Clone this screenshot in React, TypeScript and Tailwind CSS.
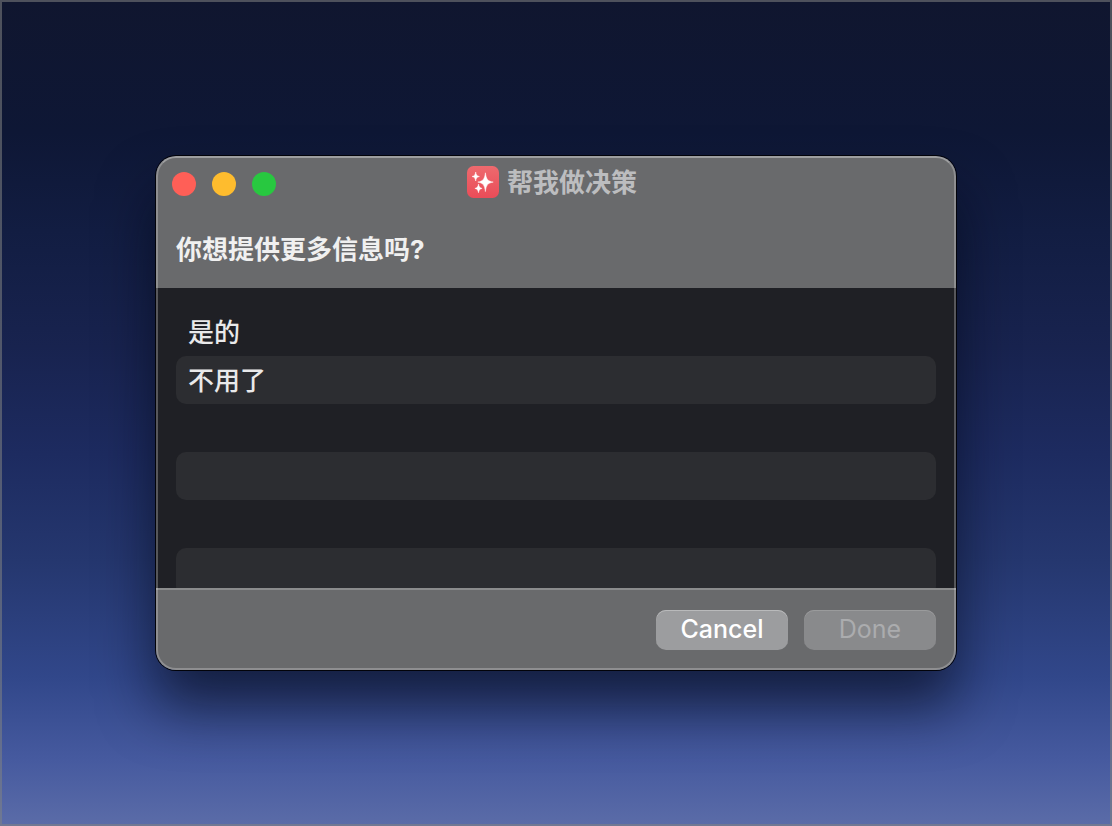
import React from "react";

const options: string[] = ["是的", "不用了", "", "", "", ""];

function SparklesIcon() {
  return (
    <svg viewBox="0 0 32 32" className="size-8 shrink-0" aria-hidden="true">
      <defs>
        <linearGradient id="tile" x1="0" y1="0" x2="0" y2="1">
          <stop offset="0" stopColor="#ee6a6e" />
          <stop offset="1" stopColor="#ea4c58" />
        </linearGradient>
      </defs>
      <rect width="32" height="32" rx="6.5" fill="url(#tile)" />
      <g fill="#ffffff" stroke="#ffffff" strokeWidth="0.5" strokeLinejoin="round">
        <path d="M18.4 6.8C19.2 13.2 20.8 15.2 26.2 16.1C20.8 17 19.2 19 18.4 25.6C17.6 19 16 17 10.8 16.1C16 15.2 17.6 13.2 18.4 6.8Z" />
        <path d="M8.7 6C9.2 9 9.9 10 12.4 10.5C9.9 11 9.2 12 8.7 15C8.2 12 7.5 11 5 10.5C7.5 10 8.2 9 8.7 6Z" />
        <path d="M11.5 18.1C12 21 12.7 21.9 15.1 22.4C12.7 22.9 12 23.8 11.5 26.7C11 23.8 10.3 22.9 7.9 22.4C10.3 21.9 11 21 11.5 18.1Z" />
      </g>
    </svg>
  );
}

function WindowControls() {
  return (
    <div className="flex gap-4">
      <button type="button" aria-label="Close" className="size-6 rounded-full bg-[#ff5f57]" />
      <button type="button" aria-label="Minimize" className="size-6 rounded-full bg-[#febc2e]" />
      <button type="button" aria-label="Zoom" className="size-6 rounded-full bg-[#28c840]" />
    </div>
  );
}

function OptionList() {
  return (
    <ul className="h-[300px] overflow-hidden bg-[#1f2025] px-5 pt-5">
      {options.map((label, index) => (
        <li key={index} className="h-12 rounded-[10px] even:bg-[#2c2d31]">
          {label && (
            <button
              type="button"
              className="flex h-12 w-full items-center px-3 pt-0.5 text-left text-[26px] leading-8 font-medium text-[#e9e9ea]"
            >
              {label}
            </button>
          )}
        </li>
      ))}
    </ul>
  );
}

export default function App() {
  return (
    <main className="relative flex min-h-screen items-center justify-center bg-[linear-gradient(to_bottom,#10162f_0%,#0e1735_16%,#121d42_28%,#18234f_42%,#1d2b60_55%,#25376f_68%,#31478a_82%,#465a9f_92%,#5b6ca8_100%)] p-8 font-[Inter,'Noto_Sans_CJK_SC',sans-serif]">
      <section
        role="dialog"
        aria-labelledby="prompt"
        className="relative w-full max-w-[800px] overflow-hidden rounded-[20px] shadow-[0_0_0_1px_#02030a,0_36px_56px_rgba(3,6,20,0.62)]"
      >
        <header className="h-[132px] bg-[#696a6c]">
          <div className="grid h-14 grid-cols-[1fr_auto_1fr] items-center px-4">
            <WindowControls />
            <div className="flex items-center gap-2 pr-2 pb-1">
              <SparklesIcon />
              <h1 className="pt-0.5 text-[26px] leading-8 font-bold text-[#bcbdbf]">帮我做决策</h1>
            </div>
          </div>
          <h2 id="prompt" className="px-5 pt-[22px] text-[26px] leading-8 font-bold text-[#f0f0f0]">
            你想提供更多信息吗?
          </h2>
        </header>
        <OptionList />
        <footer className="flex h-[82px] justify-end gap-4 border-t-2 border-[#8b8c8d] bg-[#696a6c] px-5 pt-5">
          <button
            type="button"
            className="flex h-10 w-[132px] items-center justify-center rounded-[10px] bg-[#9c9d9f] pb-0.5 text-[25px] leading-8 font-medium text-white shadow-[inset_0_1px_0_#b9babb]"
          >
            Cancel
          </button>
          <button
            type="button"
            disabled
            className="flex h-10 w-[132px] items-center justify-center rounded-[10px] bg-[#898a8c] pb-0.5 text-[25px] leading-8 text-[#abacae] shadow-[inset_0_1px_0_#9a9b9c]"
          >
            Done
          </button>
        </footer>
        <div className="pointer-events-none absolute inset-0 rounded-[20px] border-2 border-white/25 border-t-white/35" />
      </section>
      <div className="pointer-events-none absolute inset-0 border-2 border-[#828482]/55" />
    </main>
  );
}
